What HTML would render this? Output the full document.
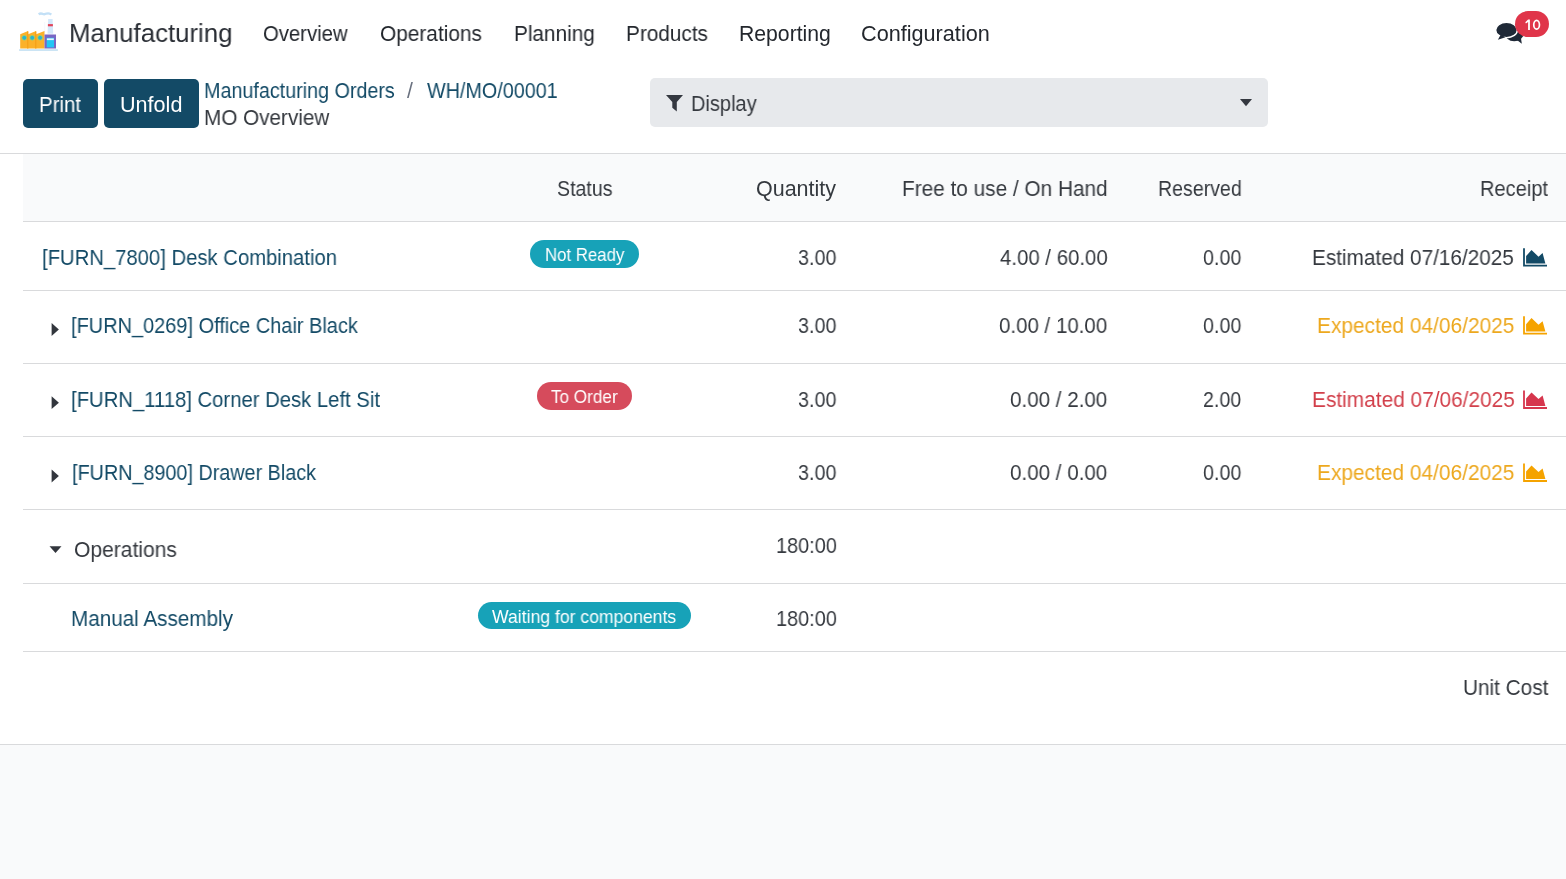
<!DOCTYPE html>
<html><head><meta charset="utf-8"><title>MO Overview</title>
<style>
html,body{margin:0;padding:0;background:#ffffff;}
body{width:1566px;height:879px;position:relative;overflow:hidden;font-family:"Liberation Sans",sans-serif;}
.t{position:absolute;white-space:pre;will-change:transform;transform-origin:0 0;}
.bp{display:inline-block;width:0;height:0;}
</style></head><body>
<div style="position:absolute;left:0px;top:744px;width:1566px;height:135px;background:#f9fafb"></div>
<div style="position:absolute;left:0px;top:153px;width:1566px;height:1px;background:#d9dadc"></div>
<div style="position:absolute;left:23px;top:154px;width:1543px;height:67px;background:#f9fafb"></div>
<div style="position:absolute;left:23px;top:221px;width:1543px;height:1px;background:#d9dadc"></div>
<div style="position:absolute;left:23px;top:290px;width:1543px;height:1px;background:#d9dadc"></div>
<div style="position:absolute;left:23px;top:363px;width:1543px;height:1px;background:#d9dadc"></div>
<div style="position:absolute;left:23px;top:436px;width:1543px;height:1px;background:#d9dadc"></div>
<div style="position:absolute;left:23px;top:509px;width:1543px;height:1px;background:#d9dadc"></div>
<div style="position:absolute;left:23px;top:583px;width:1543px;height:1px;background:#d9dadc"></div>
<div style="position:absolute;left:23px;top:651px;width:1543px;height:1px;background:#d9dadc"></div>
<div style="position:absolute;left:0px;top:744px;width:1566px;height:1px;background:#d9dadc"></div>
<svg style="position:absolute;left:0;top:0" width="70" height="60" viewBox="0 0 70 60">
<path d="M38.6 14.3 q2 -1.3 4 -0.4 q2 0.8 4 -0.3 q2 -0.8 4 0.5 l0.8 0.5" fill="none" stroke="#c3e0f6" stroke-width="2.3"/>
<path d="M48.2 19 H52.6 L53.2 33.8 H47.5 Z" fill="#d3e8fb"/>
<rect x="47.9" y="24.1" width="5" height="2.2" fill="#e2445a"/>
<rect x="44.6" y="22" width="0.5" height="12" fill="#e8f3fb"/>
<path d="M20.2 34.2 L28.1 30.9 L28.1 34.2 L36.1 30.9 L36.1 34.2 L44.5 30.9 L44.5 48.5 L20.2 48.5 Z" fill="#fbb12a"/>
<rect x="27" y="31.5" width="1.4" height="17" fill="#f6a21a"/>
<rect x="35" y="31.5" width="1.4" height="17" fill="#f6a21a"/>
<circle cx="24.3" cy="37.8" r="2.4" fill="#2ab4cf" stroke="#9fd66a" stroke-width="0.7"/>
<circle cx="32.2" cy="37.8" r="2.4" fill="#2ab4cf" stroke="#9fd66a" stroke-width="0.7"/>
<circle cx="40.1" cy="37.8" r="2.4" fill="#2ab4cf" stroke="#9fd66a" stroke-width="0.7"/>
<rect x="44.5" y="34.5" width="11.5" height="14" fill="#7866c4"/>
<rect x="46.7" y="37.8" width="7.3" height="9.6" fill="#22c6f5"/>
<rect x="46.9" y="38.4" width="6.9" height="1.7" fill="#e6f7ff"/>
<rect x="19.1" y="49.2" width="38.8" height="1.7" fill="#c6e2f3"/>
</svg>
<svg style="position:absolute;left:1490px;top:15px" width="40" height="35" viewBox="0 0 40 35">
<ellipse cx="24.2" cy="17.6" rx="9.8" ry="8.7" fill="#1f2937"/>
<path d="M26 24.2 L31.8 28.8 L30.8 22 Z" fill="#1f2937"/>
<ellipse cx="16.5" cy="15" rx="10.9" ry="7.75" fill="#1f2937" stroke="#ffffff" stroke-width="1.5"/>
<path d="M10.8 19.5 L7.9 24.8 L15.5 22.3 Z" fill="#1f2937"/>
</svg>
<div style="position:absolute;left:1515px;top:11px;width:34px;height:26px;background:#e0354a;border-radius:13px"></div>
<svg style="position:absolute;left:1520px;top:15px" width="24" height="20" viewBox="0 0 24 20">
<path d="M8.1 4.5 H9.9 V15 H8.1 V7.0 L5.9 8.6 L5.3 7.3 Z" fill="#ffffff"/>
<ellipse cx="16.6" cy="9.75" rx="2.85" ry="4.45" fill="none" stroke="#ffffff" stroke-width="1.7"/>
</svg>
<div style="position:absolute;left:23px;top:79px;width:75px;height:49px;background:#134a66;border-radius:5px"></div>
<div style="position:absolute;left:104px;top:79px;width:95px;height:49px;background:#134a66;border-radius:5px"></div>
<div style="position:absolute;left:650px;top:78px;width:618px;height:49px;background:#e7e9ec;border-radius:5px"></div>
<svg style="position:absolute;left:666px;top:95px" width="18" height="17" viewBox="0 0 18 17">
<path d="M0 0 H17 L10.8 7 V16.6 L6.3 12.8 V7 Z" fill="#343840"/></svg>
<svg style="position:absolute;left:1240px;top:99px" width="12" height="8" viewBox="0 0 12 8">
<path d="M0 0 H12 L6 7.2 Z" fill="#343840"/></svg>
<div style="position:absolute;left:530px;top:240px;width:109px;height:28px;background:#17a2b8;border-radius:14px"></div>
<div style="position:absolute;left:537px;top:382px;width:95px;height:28px;background:#d64b5c;border-radius:14px"></div>
<div style="position:absolute;left:478px;top:602px;width:213px;height:27px;background:#17a2b8;border-radius:13.5px"></div>
<svg style="position:absolute;left:1522px;top:248px" width="27" height="21" viewBox="0 0 27 21"><g transform="translate(0 0.20)">
<path d="M1.1 0 V18.3 H25 V16.5 H2.9 V0 Z" fill="#134a66"/>
<path d="M4.1 15.3 V7.9 L9.5 1.8 L16.5 8.5 L20.6 4.9 L23.4 15.3 Z" fill="#134a66"/></g></svg>
<svg style="position:absolute;left:1522px;top:316px" width="27" height="21" viewBox="0 0 27 21"><g transform="translate(0 0.30)">
<path d="M1.1 0 V18.3 H25 V16.5 H2.9 V0 Z" fill="#f5a300"/>
<path d="M4.1 15.3 V7.9 L9.5 1.8 L16.5 8.5 L20.6 4.9 L23.4 15.3 Z" fill="#f5a300"/></g></svg>
<svg style="position:absolute;left:1522px;top:390px" width="27" height="21" viewBox="0 0 27 21"><g transform="translate(0 0.60)">
<path d="M1.1 0 V18.3 H25 V16.5 H2.9 V0 Z" fill="#d6364d"/>
<path d="M4.1 15.3 V7.9 L9.5 1.8 L16.5 8.5 L20.6 4.9 L23.4 15.3 Z" fill="#d6364d"/></g></svg>
<svg style="position:absolute;left:1522px;top:463px" width="27" height="21" viewBox="0 0 27 21"><g transform="translate(0 0.60)">
<path d="M1.1 0 V18.3 H25 V16.5 H2.9 V0 Z" fill="#f5a300"/>
<path d="M4.1 15.3 V7.9 L9.5 1.8 L16.5 8.5 L20.6 4.9 L23.4 15.3 Z" fill="#f5a300"/></g></svg>
<svg style="position:absolute;left:51px;top:323px" width="9" height="14" viewBox="0 0 9 14"><g transform="translate(0 0.00)">
<path d="M0.6 0 L7.9 6.45 L0.6 12.9 Z" fill="#32363d"/></g></svg>
<svg style="position:absolute;left:51px;top:396px" width="9" height="14" viewBox="0 0 9 14"><g transform="translate(0 0.20)">
<path d="M0.6 0 L7.9 6.45 L0.6 12.9 Z" fill="#32363d"/></g></svg>
<svg style="position:absolute;left:51px;top:469px" width="9" height="14" viewBox="0 0 9 14"><g transform="translate(0 0.60)">
<path d="M0.6 0 L7.9 6.45 L0.6 12.9 Z" fill="#32363d"/></g></svg>
<svg style="position:absolute;left:48px;top:546px" width="15" height="8" viewBox="0 0 15 8">
<path d="M1.5 0.2 H13.5 L7.5 7.1 Z" fill="#32363d"/></svg>
<div class="t" id="brand" style="left:69.00px;top:20.21px;font-size:26.5px;line-height:26.5px;transform:scaleX(0.9733);color:#2a2e35">Manufacturing<i class="bp"></i></div>
<div class="t" id="nav1" style="left:262.60px;top:23.01px;font-size:21.2px;line-height:21.2px;transform:scaleX(0.9580);color:#23272d">Overview<i class="bp"></i></div>
<div class="t" id="nav2" style="left:379.80px;top:23.01px;font-size:21.2px;line-height:21.2px;transform:scaleX(0.9834);color:#23272d">Operations<i class="bp"></i></div>
<div class="t" id="nav3" style="left:513.60px;top:23.01px;font-size:21.2px;line-height:21.2px;transform:scaleX(0.9789);color:#23272d">Planning<i class="bp"></i></div>
<div class="t" id="nav4" style="left:626.20px;top:23.01px;font-size:21.2px;line-height:21.2px;transform:scaleX(0.9793);color:#23272d">Products<i class="bp"></i></div>
<div class="t" id="nav5" style="left:738.80px;top:23.01px;font-size:21.2px;line-height:21.2px;transform:scaleX(1.0000);color:#23272d">Reporting<i class="bp"></i></div>
<div class="t" id="nav6" style="left:860.60px;top:23.01px;font-size:21.2px;line-height:21.2px;transform:scaleX(1.0218);color:#23272d">Configuration<i class="bp"></i></div>
<div class="t" id="print" style="left:38.80px;top:93.90px;font-size:21.2px;line-height:21.2px;transform:scaleX(0.9629);color:#ffffff">Print<i class="bp"></i></div>
<div class="t" id="unfold" style="left:120.40px;top:93.90px;font-size:21.2px;line-height:21.2px;transform:scaleX(1.0187);color:#ffffff">Unfold<i class="bp"></i></div>
<div class="t" id="bc1" style="left:203.80px;top:79.90px;font-size:21.2px;line-height:21.2px;transform:scaleX(0.9310);color:#134a66">Manufacturing Orders<i class="bp"></i></div>
<div class="t" id="bcs" style="left:407.20px;top:79.90px;font-size:21.2px;line-height:21.2px;transform:scaleX(1.0000);color:#6b7280">/<i class="bp"></i></div>
<div class="t" id="bc2" style="left:426.60px;top:79.90px;font-size:21.2px;line-height:21.2px;transform:scaleX(0.9331);color:#134a66">WH/MO/00001<i class="bp"></i></div>
<div class="t" id="bc3" style="left:204.00px;top:106.61px;font-size:21.2px;line-height:21.2px;transform:scaleX(0.9766);color:#35393f">MO Overview<i class="bp"></i></div>
<div class="t" id="display" style="left:690.80px;top:93.01px;font-size:21.2px;line-height:21.2px;transform:scaleX(0.9450);color:#35393f">Display<i class="bp"></i></div>
<div class="t" id="h1" style="left:556.60px;top:177.90px;font-size:21.2px;line-height:21.2px;transform:scaleX(0.9238);color:#35393f">Status<i class="bp"></i></div>
<div class="t" id="h2" style="left:756.40px;top:177.90px;font-size:21.2px;line-height:21.2px;transform:scaleX(1.0142);color:#35393f">Quantity<i class="bp"></i></div>
<div class="t" id="h3" style="left:901.80px;top:177.90px;font-size:21.2px;line-height:21.2px;transform:scaleX(0.9812);color:#35393f">Free to use / On Hand<i class="bp"></i></div>
<div class="t" id="h4" style="left:1158.00px;top:177.90px;font-size:21.2px;line-height:21.2px;transform:scaleX(0.9236);color:#35393f">Reserved<i class="bp"></i></div>
<div class="t" id="h5" style="left:1480.00px;top:177.90px;font-size:21.2px;line-height:21.2px;transform:scaleX(0.9465);color:#35393f">Receipt<i class="bp"></i></div>
<div class="t" id="r1n" style="left:41.80px;top:246.70px;font-size:21.2px;line-height:21.2px;transform:scaleX(0.9562);color:#134a66">[FURN_7800] Desk Combination<i class="bp"></i></div>
<div class="t" id="r1b" style="left:544.80px;top:246.91px;font-size:17.7px;line-height:17.7px;transform:scaleX(0.9482);color:#ffffff">Not Ready<i class="bp"></i></div>
<div class="t" id="r1q" style="left:798.00px;top:246.70px;font-size:21.2px;line-height:21.2px;transform:scaleX(0.9325);color:#35393f">3.00<i class="bp"></i></div>
<div class="t" id="r1f" style="left:1000.20px;top:246.70px;font-size:21.2px;line-height:21.2px;transform:scaleX(0.9622);color:#35393f">4.00 / 60.00<i class="bp"></i></div>
<div class="t" id="r1r" style="left:1202.60px;top:246.70px;font-size:21.2px;line-height:21.2px;transform:scaleX(0.9302);color:#35393f">0.00<i class="bp"></i></div>
<div class="t" id="r1e" style="left:1312.40px;top:246.70px;font-size:21.2px;line-height:21.2px;transform:scaleX(0.9794);color:#35393f">Estimated 07/16/2025<i class="bp"></i></div>
<div class="t" id="r2n" style="left:71.40px;top:315.32px;font-size:21.2px;line-height:21.2px;transform:scaleX(0.9418);color:#134a66">[FURN_0269] Office Chair Black<i class="bp"></i></div>
<div class="t" id="r2q" style="left:798.00px;top:315.32px;font-size:21.2px;line-height:21.2px;transform:scaleX(0.9325);color:#35393f">3.00<i class="bp"></i></div>
<div class="t" id="r2f" style="left:999.00px;top:315.32px;font-size:21.2px;line-height:21.2px;transform:scaleX(0.9664);color:#35393f">0.00 / 10.00<i class="bp"></i></div>
<div class="t" id="r2r" style="left:1202.60px;top:315.32px;font-size:21.2px;line-height:21.2px;transform:scaleX(0.9302);color:#35393f">0.00<i class="bp"></i></div>
<div class="t" id="r2e" style="left:1317.00px;top:315.32px;font-size:21.2px;line-height:21.2px;transform:scaleX(0.9853);color:#eda81e">Expected 04/06/2025<i class="bp"></i></div>
<div class="t" id="r3n" style="left:70.80px;top:388.90px;font-size:21.2px;line-height:21.2px;transform:scaleX(0.9565);color:#134a66">[FURN_1118] Corner Desk Left Sit<i class="bp"></i></div>
<div class="t" id="r3b" style="left:551.20px;top:388.91px;font-size:17.7px;line-height:17.7px;transform:scaleX(0.9682);color:#ffffff">To Order<i class="bp"></i></div>
<div class="t" id="r3q" style="left:798.00px;top:388.90px;font-size:21.2px;line-height:21.2px;transform:scaleX(0.9325);color:#35393f">3.00<i class="bp"></i></div>
<div class="t" id="r3f" style="left:1010.40px;top:388.90px;font-size:21.2px;line-height:21.2px;transform:scaleX(0.9715);color:#35393f">0.00 / 2.00<i class="bp"></i></div>
<div class="t" id="r3r" style="left:1202.80px;top:388.90px;font-size:21.2px;line-height:21.2px;transform:scaleX(0.9250);color:#35393f">2.00<i class="bp"></i></div>
<div class="t" id="r3e" style="left:1312.40px;top:388.90px;font-size:21.2px;line-height:21.2px;transform:scaleX(0.9843);color:#d23f4a">Estimated 07/06/2025<i class="bp"></i></div>
<div class="t" id="r4n" style="left:72.00px;top:461.90px;font-size:21.2px;line-height:21.2px;transform:scaleX(0.9335);color:#134a66">[FURN_8900] Drawer Black<i class="bp"></i></div>
<div class="t" id="r4q" style="left:798.00px;top:461.90px;font-size:21.2px;line-height:21.2px;transform:scaleX(0.9325);color:#35393f">3.00<i class="bp"></i></div>
<div class="t" id="r4f" style="left:1010.40px;top:461.90px;font-size:21.2px;line-height:21.2px;transform:scaleX(0.9715);color:#35393f">0.00 / 0.00<i class="bp"></i></div>
<div class="t" id="r4r" style="left:1202.60px;top:461.90px;font-size:21.2px;line-height:21.2px;transform:scaleX(0.9302);color:#35393f">0.00<i class="bp"></i></div>
<div class="t" id="r4e" style="left:1317.00px;top:461.90px;font-size:21.2px;line-height:21.2px;transform:scaleX(0.9853);color:#eda81e">Expected 04/06/2025<i class="bp"></i></div>
<div class="t" id="ops" style="left:74.40px;top:538.70px;font-size:21.2px;line-height:21.2px;transform:scaleX(0.9931);color:#35393f">Operations<i class="bp"></i></div>
<div class="t" id="ops180" style="left:776.00px;top:534.90px;font-size:21.2px;line-height:21.2px;transform:scaleX(0.9398);color:#35393f">180:00<i class="bp"></i></div>
<div class="t" id="man" style="left:71.00px;top:607.70px;font-size:21.2px;line-height:21.2px;transform:scaleX(0.9752);color:#134a66">Manual Assembly<i class="bp"></i></div>
<div class="t" id="manb" style="left:492.20px;top:609.31px;font-size:17.7px;line-height:17.7px;transform:scaleX(0.9946);color:#ffffff">Waiting for components<i class="bp"></i></div>
<div class="t" id="man180" style="left:776.00px;top:607.70px;font-size:21.2px;line-height:21.2px;transform:scaleX(0.9398);color:#35393f">180:00<i class="bp"></i></div>
<div class="t" id="unit" style="left:1463.00px;top:676.82px;font-size:21.2px;line-height:21.2px;transform:scaleX(0.9802);color:#35393f">Unit Cost<i class="bp"></i></div>
</body></html>
